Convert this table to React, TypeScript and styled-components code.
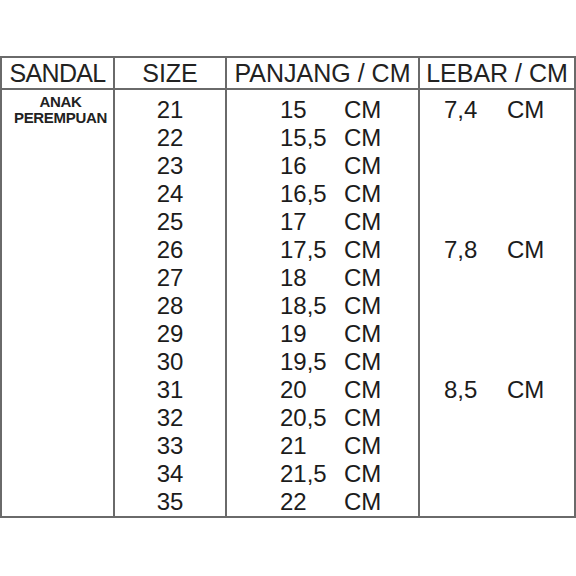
import React from "react";
import styled, { createGlobalStyle } from "styled-components";

const GlobalStyle = createGlobalStyle`
  html, body {
    margin: 0;
    padding: 0;
    background: #ffffff;
  }

  body {
    font-family: "Liberation Sans", Arial, sans-serif;
    color: #1c1c1c;
  }
`;

const lineColor = "#6a6a6a";

const Page = styled.div`
  width: 576px;
  height: 576px;
  padding-top: 56px;
  box-sizing: border-box;
`;

const Sheet = styled.div`
  display: grid;
  grid-template-columns: 113px 112px 193px 156px;
  grid-template-rows: 32px 428px;
  border-left: 2px solid ${lineColor};
  border-top: 2px solid ${lineColor};
`;

const HeadCell = styled.div<{ $tight?: boolean }>`
  display: flex;
  align-items: center;
  justify-content: center;
  box-sizing: border-box;
  border-right: 2px solid ${lineColor};
  border-bottom: 2px solid ${lineColor};
  font-size: 25px;
  line-height: 30px;
  letter-spacing: ${(p) => (p.$tight ? "-0.7px" : "0")};
  color: #222;
  white-space: nowrap;
`;

const BodyCell = styled.div<{ $padLeft?: number; $padTop?: number }>`
  box-sizing: border-box;
  border-right: 2px solid ${lineColor};
  border-bottom: 2px solid ${lineColor};
  padding-top: ${(p) => p.$padTop ?? 6}px;
  padding-left: ${(p) => p.$padLeft ?? 0}px;
`;

const Category = styled.div`
  padding: 4px 0 0 6px;
  text-align: center;
  font-weight: bold;
  font-size: 15px;
  line-height: 15.5px;
  letter-spacing: -0.3px;
  color: #222;
`;

const SizeRow = styled.div`
  height: 28px;
  line-height: 28px;
  font-size: 24px;
  text-align: center;
`;

const MeasureRow = styled.div`
  display: flex;
  height: 28px;
  line-height: 28px;
  font-size: 24px;
  white-space: nowrap;
`;

const Num = styled.span<{ $w: number }>`
  width: ${(p) => p.$w}px;
`;

const sizes = Array.from({ length: 15 }, (_, i) => 21 + i);

const lengths = [
  "15",
  "15,5",
  "16",
  "16,5",
  "17",
  "17,5",
  "18",
  "18,5",
  "19",
  "19,5",
  "20",
  "20,5",
  "21",
  "21,5",
  "22",
];

const widths: (string | null)[] = sizes.map((_, i) =>
  i === 0 ? "7,4" : i === 5 ? "7,8" : i === 10 ? "8,5" : null
);

export default function App() {
  return (
    <>
      <GlobalStyle />
      <Page>
        <Sheet>
          <HeadCell $tight>SANDAL</HeadCell>
          <HeadCell>SIZE</HeadCell>
          <HeadCell>PANJANG / CM</HeadCell>
          <HeadCell>LEBAR / CM</HeadCell>

          <BodyCell $padTop={0}>
            <Category>
              ANAK
              <br />
              PEREMPUAN
            </Category>
          </BodyCell>

          <BodyCell>
            {sizes.map((s) => (
              <SizeRow key={s}>{s}</SizeRow>
            ))}
          </BodyCell>

          <BodyCell $padLeft={53}>
            {lengths.map((l) => (
              <MeasureRow key={l}>
                <Num $w={64}>{l}</Num>
                <span>CM</span>
              </MeasureRow>
            ))}
          </BodyCell>

          <BodyCell $padLeft={24}>
            {widths.map((w, i) => (
              <MeasureRow key={i}>
                {w && (
                  <>
                    <Num $w={63}>{w}</Num>
                    <span>CM</span>
                  </>
                )}
              </MeasureRow>
            ))}
          </BodyCell>
        </Sheet>
      </Page>
    </>
  );
}
